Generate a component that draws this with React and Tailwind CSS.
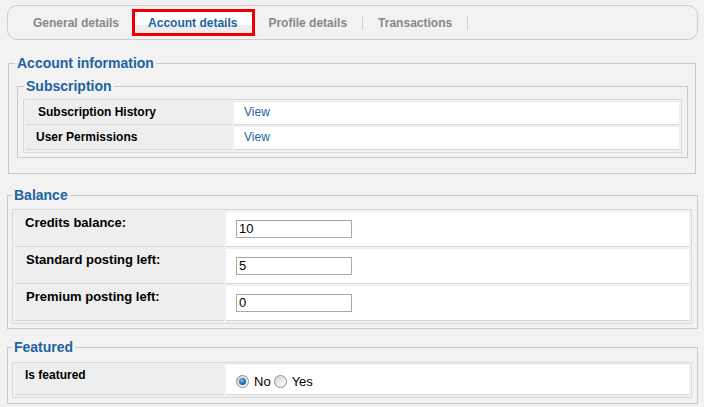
import React from "react";

const FONT = "font-['Liberation_Sans',Arial,sans-serif]";

function Tab({ children, sep = true, first = false }) {
  return (
    <div className="flex items-center">
      <span className={`${first ? "pl-[15px] pr-[13px]" : "pl-[13px] pr-[15px]"} text-[12px] font-bold text-[#888888] leading-[14px]`}>
        {children}
      </span>
      {sep && <span className="w-px h-[14px] bg-[#cfcfcf]" />}
    </div>
  );
}

function Row({ label, labelW, h, children, labelClass, valueClass }) {
  return (
    <div className="flex gap-[2px]">
      <div
        className={`${labelW} ${h} shrink-0 bg-[#eeeeee] border-b border-[#d8d8d8] pl-[10px] pt-[3px] font-bold text-black ${labelClass}`}
      >
        {label}
      </div>
      <div className={`flex-1 ${h} bg-white border-b border-[#d8d8d8] ${valueClass}`}>{children}</div>
    </div>
  );
}

function Input({ value }) {
  return (
    <div className="ml-[10px] mt-[8px] w-[116px] h-[18px] border border-[#a9a9a9] bg-white pl-[2px] text-[13px] leading-[16px] text-black">
      {value}
    </div>
  );
}

function Radio({ checked }) {
  return (
    <span className="w-[13px] h-[13px] rounded-full border border-[#8d8d8d] bg-[linear-gradient(135deg,#d4d4d4,#ffffff)] flex items-center justify-center">
      {checked && (
        <span className="w-[7px] h-[7px] rounded-full bg-[radial-gradient(circle_at_40%_35%,#7cc0f2,#1f6db6_55%,#0d3e74)]" />
      )}
    </span>
  );
}

export default function App() {
  return (
    <div className={`w-[704px] min-h-[407px] bg-[#f2f2f2] px-[7px] pt-[5px] pb-[4px] ${FONT}`}>
      {/* Tab bar */}
      <div className="h-[35px] rounded-[10px] border border-[#cdcdcd] flex items-center mr-[-1px] pl-[10px]">
        <Tab first sep={false}>General details</Tab>
        <div className="h-[27px] border-[3px] border-[#ee0000] bg-[linear-gradient(to_bottom,#ffffff_62%,#eeeeee_62%)] flex items-center pl-[13px] pr-[15px] text-[12px] font-bold text-[#1b62a3] leading-[14px]">
          Account details
        </div>
        <Tab>Profile details</Tab>
        <div className="flex items-center">
          <span className="pl-[15px] pr-[15px] text-[12px] font-bold text-[#888888] leading-[14px]">Transactions</span>
          <span className="w-px h-[14px] bg-[#cfcfcf]" />
        </div>
      </div>

      {/* Account information */}
      <fieldset className="mt-[15px] mx-[1px] border border-[#c9c9c9] pl-[8px] pr-[7px] pt-[6px] pb-[15px]">
        <legend className="ml-[-2px] px-[2px] text-[14px] leading-[17px] font-bold text-[#1d63a2]">
          Account information
        </legend>
        <fieldset className="border border-[#c9c9c9] pl-[5px] pr-[5px] pt-[4px] pb-[4px]">
          <legend className="ml-[1px] px-[2px] text-[14px] leading-[17px] font-bold text-[#1d63a2]">
            Subscription
          </legend>
          <div className="border border-[#d9d9d9] bg-[#f0f0f0] p-[2px] flex flex-col gap-[2px]">
            <Row label="Subscription History" labelW="w-[206px]" h="h-[23px]" labelClass="text-[12px] leading-[14px] pl-[12px]" valueClass="pl-[10px] pt-[3px] text-[12px] leading-[14px] text-[#1f62a6]">
              View
            </Row>
            <Row label="User Permissions" labelW="w-[206px]" h="h-[23px]" labelClass="text-[12px] leading-[14px]" valueClass="pl-[10px] pt-[3px] text-[12px] leading-[14px] text-[#1f62a6]">
              View
            </Row>
          </div>
        </fieldset>
      </fieldset>

      {/* Balance */}
      <fieldset className="mt-[13px] mr-[-1px] border border-[#c9c9c9] pl-[4px] pr-[5px] pt-[5px] pb-[4px]">
        <legend className="px-[2px] text-[14px] leading-[17px] font-bold text-[#1d63a2]">Balance</legend>
        <div className="border border-[#d9d9d9] bg-[#f0f0f0] p-[2px] flex flex-col gap-[2px]">
          <Row label="Credits balance:" labelW="w-[209px]" h="h-[35px]" labelClass="text-[13px] leading-[15px]">
            <Input value="10" />
          </Row>
          <Row label="Standard posting left:" labelW="w-[209px]" h="h-[35px]" labelClass="text-[13px] leading-[15px] pl-[11px]">
            <Input value="5" />
          </Row>
          <Row label="Premium posting left:" labelW="w-[209px]" h="h-[35px]" labelClass="text-[13px] leading-[15px] pl-[11px]">
            <Input value="0" />
          </Row>
        </div>
      </fieldset>

      {/* Featured */}
      <fieldset className="mt-[10px] mr-[-1px] border border-[#c9c9c9] pl-[4px] pr-[5px] pt-[6px] pb-[5px]">
        <legend className="px-[2px] text-[14px] leading-[17px] font-bold text-[#1d63a2]">Featured</legend>
        <div className="border border-[#d9d9d9] bg-[#f0f0f0] p-[2px] flex flex-col gap-[2px]">
          <Row label="Is featured" labelW="w-[209px]" h="h-[30px]" labelClass="text-[12px] leading-[14px]">
            <div className="ml-[10px] mt-[9px] flex items-center text-[13px] leading-[15px] text-black">
              <Radio checked />
              <span className="ml-[5px]">No</span>
              <span className="ml-[3px]"><Radio /></span>
              <span className="ml-[5px]">Yes</span>
            </div>
          </Row>
        </div>
      </fieldset>
    </div>
  );
}
